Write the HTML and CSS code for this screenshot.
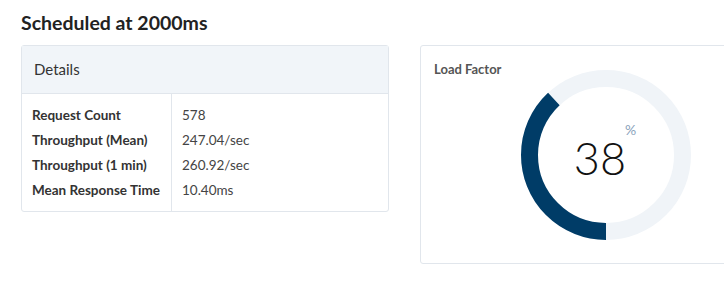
FILE: index.html
```html
<!DOCTYPE html>
<html lang="en">
<head>
    <meta charset="UTF-8">
    <title>Scheduled at 2000ms</title>
    <link rel="stylesheet" href="styles.css">
</head>
<body>
    <h1>Scheduled at 2000ms</h1>

    <div class="row">
        <div class="card details">
            <div class="card-header">Details</div>
            <table class="stats">
                <tr><th>Request Count</th><td>578</td></tr>
                <tr><th>Throughput (Mean)</th><td>247.04/sec</td></tr>
                <tr><th>Throughput (1 min)</th><td>260.92/sec</td></tr>
                <tr><th>Mean Response Time</th><td>10.40ms</td></tr>
            </table>
        </div>

        <div class="card load">
            <div class="load-title">Load Factor</div>
            <div class="gauge">
                <svg width="170" height="170" viewBox="0 0 170 170">
                    <circle cx="85" cy="85" r="76.5" fill="none" stroke="#f0f4f8" stroke-width="17"/>
                    <circle cx="85" cy="85" r="76.5" fill="none" stroke="#003c67" stroke-width="17"
                        stroke-dasharray="182.65 480.66" transform="rotate(90 85 85)"/>
                </svg>
                <div class="gauge-value">
                    <span class="num">38</span><span class="unit">%</span>
                </div>
            </div>
        </div>
    </div>
</body>
</html>
```

FILE: styles.css
```css
body {
    margin: 0;
    padding: 11px 21px;
    font-family: 'Lato', sans-serif;
    color: #333;
    background: #fff;
    overflow: hidden;
}
h1 {
    font-size: 19.5px;
    font-weight: 700;
    color: #222;
    margin: 0 0 10px 0;
    line-height: 24px;
}
.row {
    display: flex;
    gap: 31px;
    align-items: flex-start;
}
.card {
    border: 1px solid #e1e6ec;
    border-radius: 3px;
    background: #fff;
    flex: none;
}
.details {
    width: 366px;
}
.card-header {
    background: #f1f5f9;
    border-bottom: 1px solid #e1e6ec;
    height: 47px;
    line-height: 47px;
    padding-left: 12px;
    font-size: 15px;
    color: #333;
}
.stats {
    border-collapse: collapse;
    width: 100%;
    font-size: 13.5px;
}
.stats th {
    text-align: left;
    font-weight: 700;
    color: #333;
    width: 139px;
    padding: 0 0 0 10px;
    height: 25px;
    border-right: 1px solid #e1e6ec;
}
.stats td {
    color: #444;
    padding: 0 0 0 10px;
    height: 25px;
}
.stats tr:first-child th,
.stats tr:first-child td {
    padding-top: 8px;
}
.stats tr:last-child th,
.stats tr:last-child td {
    padding-bottom: 9px;
}
.load {
    width: 344px;
    padding: 15px 13px 23px 13px;
}
.load-title {
    font-size: 13px;
    font-weight: 700;
    color: #555;
    line-height: 16px;
}
.gauge {
    position: relative;
    width: 170px;
    height: 170px;
    margin: -7px auto 0 auto;
}
.gauge svg {
    display: block;
}
.gauge-value {
    position: absolute;
    inset: 0;
    display: flex;
    justify-content: center;
    align-items: center;
}
.num {
    font-size: 45px;
    font-weight: 300;
    color: #111;
    line-height: 1;
    margin-top: 6px;
    margin-left: -2px;
}
.unit {
    font-size: 14px;
    color: #8aa2bb;
    align-self: flex-start;
    margin-top: 51px;
    margin-left: -1px;
}
```
